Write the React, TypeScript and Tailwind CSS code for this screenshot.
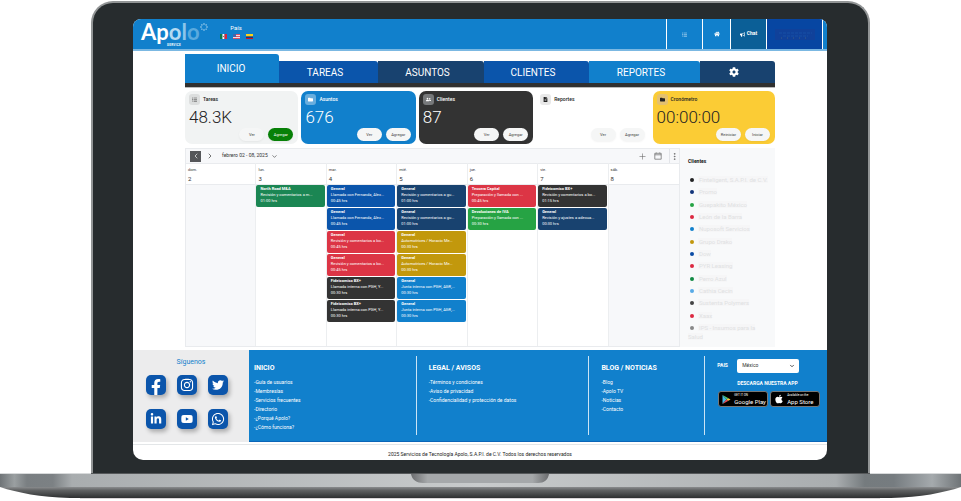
import { FaFacebookF, FaInstagram, FaTwitter, FaLinkedinIn, FaYoutube, FaWhatsapp, FaCog, FaHome, FaBullhorn, FaListUl, FaFolder, FaUserFriends, FaFileAlt, FaApple } from 'react-icons/fa';
import { ChevronLeft, ChevronRight, ChevronDown, Plus, MoreVertical } from 'lucide-react';
import type { ReactNode } from 'react';

const tabs = [
  { label: 'TAREAS', cls: 'bg-[#0b55ab]' },
  { label: 'ASUNTOS', cls: 'bg-[#18426f]' },
  { label: 'CLIENTES', cls: 'bg-[#0b55ab]' },
  { label: 'REPORTES', cls: 'bg-[#1180cc]' },
];

type Action = { label: string; cls?: string };
type CardProps = { title: string; value?: string; icon: ReactNode; cls: string; iconCls: string; actions: Action[] };

const cards: CardProps[] = [
  { title: 'Tareas', value: '48.3K', icon: <FaListUl />, cls: 'bg-[#f1f3f3] text-[#222]', iconCls: 'bg-[#dcdede] text-[#444]', actions: [{ label: 'Ver' }, { label: 'Agregar', cls: 'bg-[#078007] text-white' }] },
  { title: 'Asuntos', value: '676', icon: <FaFolder />, cls: 'bg-[#1180cc] text-white', iconCls: 'bg-[#68aede] text-white', actions: [{ label: 'Ver' }, { label: 'Agregar' }] },
  { title: 'Clientes', value: '87', icon: <FaUserFriends />, cls: 'bg-[#333] text-white', iconCls: 'bg-[#77797b] text-white', actions: [{ label: 'Ver' }, { label: 'Agregar' }] },
  { title: 'Reportes', icon: <FaFileAlt />, cls: 'bg-white text-[#222]', iconCls: 'bg-[#e8e8e8] text-[#222]', actions: [{ label: 'Ver' }, { label: 'Agregar' }] },
  { title: 'Cronómetro', value: '00:00:00', icon: <FaFolder />, cls: 'bg-[#fbcc35] text-[#222]', iconCls: 'bg-[#e3c070] text-[#222]', actions: [{ label: 'Reiniciar' }, { label: 'Iniciar' }] },
];

type Event = { title: string; text: string; time: string; cls: string };
const ferLlamada: Event = { title: 'General', text: 'Llamada con Fernanda, Alex...', time: '00:45 hrs', cls: 'bg-[#0b55ab]' };
const revGu: Event = { title: 'General', text: 'Revisión y comentarios a gu...', time: '01:00 hrs', cls: 'bg-[#18426f]' };
const revBo: Event = { title: 'General', text: 'Revisión y comentarios a bo...', time: '00:45 hrs', cls: 'bg-[#dc3545]' };
const auto: Event = { title: 'General', text: 'Automotrices / Horacio Me...', time: '00:30 hrs', cls: 'bg-[#c2980c]' };
const fidei: Event = { title: 'Fideicomiso BX+', text: 'Llamada interna con PGH, Y...', time: '00:30 hrs', cls: 'bg-[#333]' };
const junta: Event = { title: 'General', text: 'Junta interna con PGH, AGR,...', time: '00:30 hrs', cls: 'bg-[#1180cc]' };

const days: { name: string; date: number; events: Event[] }[] = [
  { name: 'dom.', date: 2, events: [] },
  { name: 'lun.', date: 3, events: [{ title: 'North Road M&A', text: 'Revisión y comentarios a m...', time: '01:00 hrs', cls: 'bg-[#1b8653]' }] },
  { name: 'mar.', date: 4, events: [ferLlamada, ferLlamada, revBo, revBo, fidei, fidei] },
  { name: 'mié.', date: 5, events: [revGu, revGu, auto, auto, junta, junta] },
  { name: 'jue.', date: 6, events: [
    { title: 'Tessera Capital', text: 'Preparación y llamada con ...', time: '00:45 hrs', cls: 'bg-[#dc3545]' },
    { title: 'Devoluciones de IVA', text: 'Preparación y llamada con ...', time: '00:30 hrs', cls: 'bg-[#26a344]' },
  ] },
  { name: 'vie.', date: 7, events: [
    { title: 'Fideicomiso BX+', text: 'Revisión y comentarios a bo...', time: '01:15 hrs', cls: 'bg-[#333]' },
    { title: 'General', text: 'Revisión y ajustes a adecua...', time: '00:30 hrs', cls: 'bg-[#18426f]' },
  ] },
  { name: 'sáb.', date: 8, events: [] },
];

const clients = [
  ['Finteligent, S.A.P.I. de C.V.', 'bg-[#222]'],
  ['Promo', 'bg-[#12357a]'],
  ['Guepakito México', 'bg-[#26a344]'],
  ['León de la Barra', 'bg-[#dc2940]'],
  ['Nuposoft Servicios', 'bg-[#1180cc]'],
  ['Grupo Drako', 'bg-[#c2980c]'],
  ['Dow', 'bg-[#0b4ca5]'],
  ['PYR Leasing', 'bg-[#dc2940]'],
  ['Perro Azul', 'bg-[#118a42]'],
  ['Cathia Cecin', 'bg-[#58aae6]'],
  ['Sustenta Polymers', 'bg-[#444]'],
  ['Xaax', 'bg-[#dc2940]'],
  ['IPS - Insumos para la Salud', 'bg-[#888]'],
];

const socials = [
  { name: 'Facebook', icon: <FaFacebookF className="mt-1 size-4" /> },
  { name: 'Instagram', icon: <FaInstagram className="size-3.5" /> },
  { name: 'Twitter', icon: <FaTwitter className="size-3" /> },
  { name: 'LinkedIn', icon: <FaLinkedinIn className="size-3" /> },
  { name: 'YouTube', icon: <FaYoutube className="size-3" /> },
  { name: 'WhatsApp', icon: <FaWhatsapp className="size-3.5" /> },
];

const footerColumns = [
  { title: 'INICIO', pad: 'pl-[5px]', links: ['Guía de usuarios', 'Membresías', 'Servicios frecuentes', 'Directorio', '¿Porqué Apolo?', '¿Cómo funciona?'] },
  { title: 'LEGAL / AVISOS', pad: 'pl-3', links: ['Términos y condiciones', 'Aviso de privacidad', 'Confidencialidad y protección de datos'] },
  { title: 'BLOG / NOTICIAS', pad: 'pl-3', links: ['Blog', 'Apolo TV', 'Noticias', 'Contacto'] },
];

function Flag({ kind }: { kind: 'mx' | 'us' | 'co' }) {
  return (
    <svg viewBox="0 0 14 10" className="h-[5px] w-[7px]" aria-hidden="true">
      {kind === 'mx' && (<><path fill="#0b7a4b" d="M0 0h5v10H0z" /><path fill="#fff" d="M5 0h4v10H5z" /><path fill="#d7263d" d="M9 0h5v10H9z" /><circle cx="7" cy="5" r="1.3" fill="#9c7b4b" /></>)}
      {kind === 'us' && (<><path fill="#f3dfe4" d="M0 0h14v10H0z" /><path fill="#d9536a" d="M0 0h14v2H0zM0 4h14v2H0zM0 8h14v2H0z" /><path fill="#4664a8" d="M0 0h6v6H0z" /></>)}
      {kind === 'co' && (<><path fill="#fcd116" d="M0 0h14v5H0z" /><path fill="#173a80" d="M0 5h14v3H0z" /><path fill="#ce1126" d="M0 8h14v2H0z" /></>)}
    </svg>
  );
}

function Header() {
  return (
    <header className="flex h-8 border-b-2 border-[#7bb8e2] bg-[#1180cc] text-white">
      <div className="flex flex-1 items-start pl-2">
        <a href="#" className="block">
          <span className="flex items-start font-['Lato'] text-[22px] leading-[22px] font-bold">
            <span className="pt-0.5">Ap<span className="text-[#b5daf2]">o</span><span className="text-[#8cc5ea]">l</span><span className="text-[#5baade]">o</span></span>
            <svg viewBox="0 0 16 16" className="mt-1 size-2" aria-hidden="true">
              <g fill="#d5ebf9">
                <circle cx="8" cy="2" r="1.300" /><circle cx="12.200" cy="3.800" r="1.300" /><circle cx="14" cy="8" r="1.300" /><circle cx="12.200" cy="12.200" r="1.300" />
                <circle cx="8" cy="14" r="1.300" /><circle cx="3.800" cy="12.200" r="1.300" /><circle cx="2" cy="8" r="1.300" /><circle cx="3.800" cy="3.800" r="1.300" />
              </g>
            </svg>
          </span>
          <span className="block pl-[26px] text-[3px] leading-[4px] font-bold tracking-widest">SERVICE</span>
        </a>
        <div className="ml-3 pt-[5px] text-center">
          <p className="text-[6px] leading-[8px]">País</p>
          <div className="mt-0.5 flex gap-1.5"><Flag kind="mx" /><Flag kind="us" /><Flag kind="co" /></div>
        </div>
      </div>
      <nav className="flex text-[5px] font-bold" aria-label="Accesos">
        <button aria-label="Menú" className="flex w-9 items-center justify-center border-l border-white"><FaListUl className="size-[5px] text-[#cfe6f6]" /></button>
        <button aria-label="Inicio" className="flex w-7 items-center justify-center border-l border-white"><FaHome className="size-[6px]" /></button>
        <button className="flex w-9 items-center justify-center gap-0.5 border-l border-white bg-[#0b5f97]"><FaBullhorn className="size-[5px]" />Chat</button>
        <button aria-label="Cuenta" className="flex w-14 items-center justify-center border-l border-white bg-[#0746a2]">
          <svg viewBox="0 0 40 11" className="h-[11px] w-10" aria-hidden="true">
            <path fill="#10419a" d="M0 0h40v11H0z" />
            <path stroke="#1750a6" strokeDasharray="3 1" d="M4 4h33M8 7h25" />
            <path stroke="#3c5f86" strokeDasharray="1 5" d="M6 9h30" />
          </svg>
        </button>
        <span className="w-[5px] border-l border-white" />
      </nav>
    </header>
  );
}

function Tabs() {
  return (
    <nav className="grid grid-cols-[94fr_99fr_106fr_105fr_111fr_75fr] items-end border-b-4 border-[#303030] text-[10px] text-white shadow-[0_1px_0_#bbb]" aria-label="Secciones">
      <button className="h-[29px] rounded-tr-[3px] bg-[#1180cc] pr-0.5">INICIO</button>
      {tabs.map((t) => (
        <button key={t.label} className={`h-[22px] rounded-tr-[3px] pr-[7px] ${t.cls}`}>{t.label}</button>
      ))}
      <button aria-label="Configuración" className="flex h-[22px] items-center justify-center rounded-tr-[3px] bg-[#18426f] pr-[7px]"><FaCog className="size-[10px]" /></button>
    </nav>
  );
}

function Card({ title, value, icon, cls, iconCls, actions }: CardProps) {
  return (
    <section className={`flex h-[53px] flex-col rounded-[7px] px-1 py-[3px] ${cls}`}>
      <div className="flex items-center gap-[3px]">
        <span className={`flex size-[11px] items-center justify-center rounded-[3px] text-[5px] ${iconCls}`}>{icon}</span>
        <h2 className="text-[5px] leading-[11px] font-medium">{title}</h2>
      </div>
      <p className="flex-1 text-[17px] leading-[24px] font-light">{value}</p>
      <div className="-mt-3 flex justify-end gap-1 pr-px">
        {actions.map((a) => (
          <button key={a.label} className={`h-[13px] w-[25px] rounded-full text-[4px] leading-[13px] shadow-xs ${a.cls ?? 'bg-[#f5f6f6] text-[#444]'}`}>{a.label}</button>
        ))}
      </div>
    </section>
  );
}

function Calendar() {
  return (
    <section className="border border-[#e9ebee]" aria-label="Calendario">
      <div className="flex h-3.5 items-center bg-[#f7f8fa] pl-1 text-[#333]">
        <button aria-label="Anterior" className="flex size-[11px] items-center justify-center bg-[#55575a] text-white"><ChevronLeft className="size-2" /></button>
        <button aria-label="Siguiente" className="ml-[5px]"><ChevronRight className="size-2" /></button>
        <button className="ml-2 flex items-center gap-[3px] text-[5px]">febrero 02 - 08, 2025 <ChevronDown className="size-[7px]" /></button>
        <div className="ml-auto flex h-full items-center gap-[7px] text-[#666]">
          <button aria-label="Agregar evento"><Plus className="size-[9px]" strokeWidth={1.5} /></button>
          <button aria-label="Ver calendario">
            <svg viewBox="0 0 8 8" className="size-2" fill="none" stroke="currentColor" strokeWidth=".7" aria-hidden="true"><path d="M.8 1.300h6.400v5.900H.8zM.8 2.800h6.400M2.300.500v.8M5.700.500v.8" /></svg>
          </button>
          <button aria-label="Más opciones" className="flex h-full items-center border-l border-[#e2e4e8]"><MoreVertical className="size-[9px]" /></button>
        </div>
      </div>
      <div className="grid h-[183px] grid-cols-7">
        {days.map((d, i) => (
          <div key={d.name} className="flex min-w-0 flex-col border-r border-[#eceef0] last:border-r-0">
            <div className="h-[22px] border-y border-[#e9ebee] pt-0.5 pl-0.5 text-[#333]">
              <p className="text-[4px] leading-[8px]">{d.name}</p>
              <p className="text-[6px] leading-[10px]">{d.date}</p>
            </div>
            <div className={`flex flex-1 flex-col gap-px pr-px ${i === 0 || i === 6 ? 'bg-[#f7f8fa]' : 'bg-white'}`}>
              {d.events.map((e, j) => (
                <article key={j} className={`h-[22px] overflow-hidden rounded-[2px] pt-px pl-1 text-[4px] leading-[6px] whitespace-nowrap text-white ${e.cls}`}>
                  <h3 className="font-bold">{e.title}</h3>
                  <p>{e.text}</p>
                  <p>{e.time}</p>
                </article>
              ))}
            </div>
          </div>
        ))}
      </div>
    </section>
  );
}

function Clients() {
  return (
    <aside className="flex flex-col bg-[#f8f9fa] pt-2 pr-1.5 pb-1.5 pl-2">
      <h2 className="text-[5px] leading-[10px] font-bold text-[#111]">Clientes</h2>
      <ul className="mt-[9px] flex flex-1 flex-col justify-between text-[6px] leading-[9px] text-[#e0e1e2]">
        {clients.map(([name, dot]) => (
          <li key={name}>
            <span className={`mr-1 ml-0.5 inline-block size-1 rounded-full ${dot}`} />
            <span className="bg-[#f6f6f7] pl-px">{name}</span>
          </li>
        ))}
      </ul>
    </aside>
  );
}

function StoreBadge({ top, name, icon }: { top: string; name: string; icon: ReactNode }) {
  return (
    <a href="#" className="flex h-4 w-[50px] items-center gap-[3px] rounded-[3px] border border-[#777] bg-black pl-[3px] text-white">
      {icon}
      <span className="whitespace-nowrap">
        <span className="block text-[3px] leading-[5px]">{top}</span>
        <span className="block text-[6px] leading-[7px]">{name}</span>
      </span>
    </a>
  );
}

function Footer() {
  return (
    <footer>
      <div className="flex h-[92px]">
        <section className="w-[116px] bg-[#ececed] px-[13px] pt-[7px]">
          <h2 className="text-center text-[7px] leading-[10px] text-[#1180cc]">Síguenos</h2>
          <div className="mt-2 flex flex-wrap gap-x-[11px] gap-y-3.5">
            {socials.map((s) => (
              <a key={s.name} href="#" aria-label={s.name} className="flex size-5 items-center justify-center overflow-hidden rounded-[5px] bg-[#0b55ab] text-white shadow-[2px_3px_4px_#0004]">{s.icon}</a>
            ))}
          </div>
        </section>
        <div className="grid flex-1 grid-cols-[168fr_173fr_116fr_122fr] border-b border-[#0b66b8] bg-[#1180cc] py-1.5 text-white">
          {footerColumns.map((c) => (
            <section key={c.title} className={`border-r border-[#cbe4f5] pt-[7px] ${c.pad}`}>
              <h2 className="text-[7px] leading-[10px] font-bold whitespace-nowrap">{c.title}</h2>
              <ul className="mt-[5px] text-[5px] leading-[9px]">
                {c.links.map((l) => <li key={l}><a href="#">-{l}</a></li>)}
              </ul>
            </section>
          ))}
          <section className="pt-[3px] pl-3">
            <div className="flex items-center">
              <label htmlFor="pais" className="w-5 text-[5px] font-bold">PAIS</label>
              <div className="relative">
                <select id="pais" defaultValue="México" className="block h-3.5 w-[62px] appearance-none rounded-[2px] bg-white pl-[5px] text-[5px] text-[#333]">
                  <option>México</option>
                </select>
                <ChevronDown className="pointer-events-none absolute top-1 right-1 size-[6px] text-[#222]" strokeWidth={3} />
              </div>
            </div>
            <p className="mt-[6px] pl-5 text-[5px] leading-[9px] font-bold whitespace-nowrap">DESCARGA NUESTRA APP</p>
            <div className="mt-[3px] flex gap-0.5 pl-px">
              <StoreBadge top="GET IT ON" name="Google Play" icon={
                <svg viewBox="0 0 16 18" className="size-[9px] shrink-0" aria-hidden="true">
                  <path fill="#46b8e6" d="M0 0v18l8-9z" /><path fill="#4ac776" d="M0 0l12 6.500L8 9z" /><path fill="#e94b57" d="M0 18l12-6.500L8 9z" /><path fill="#f8cc3c" d="M12 6.500L16 9l-4 2.500L8 9z" />
                </svg>} />
              <StoreBadge top="Available on the" name="App Store" icon={<FaApple className="size-[10px] shrink-0" />} />
            </div>
          </section>
        </div>
      </div>
      <p className="mt-0.5 h-4 border-t border-[#e3e6e8] pt-[5px] text-center text-[5px] leading-[9px] text-[#222]">2025 Servicios de Tecnología Apolo, S.A.P.I. de C.V. Todos los derechos reservados</p>
    </footer>
  );
}

function LaptopBase() {
  return (
    <svg viewBox="0 0 961 28" preserveAspectRatio="none" className="block h-7 w-full" aria-hidden="true">
      <defs>
        <linearGradient id="deck" x1="0" x2="1" y1="0" y2="0">
          <stop offset="0" stopColor="#6f7477" /><stop offset=".015" stopColor="#9a9fa1" /><stop offset=".028" stopColor="#7a7f82" /><stop offset=".055" stopColor="#7c8184" /><stop offset=".075" stopColor="#a9adaf" />
          <stop offset=".5" stopColor="#c8cbcc" />
          <stop offset=".87" stopColor="#a9adaf" /><stop offset=".9" stopColor="#757b7e" /><stop offset=".93" stopColor="#767c80" /><stop offset=".97" stopColor="#a5aaad" /><stop offset="1" stopColor="#6f7477" />
        </linearGradient>
        <linearGradient id="under" x1="0" x2="0" y1="0" y2="1"><stop offset="0" stopColor="#8a8c8e" /><stop offset=".3" stopColor="#606263" /><stop offset="1" stopColor="#2d2f30" /></linearGradient>
        <linearGradient id="notch" x1="0" x2="1" y1="0" y2="0"><stop offset="0" stopColor="#6b6d6f" /><stop offset=".12" stopColor="#a5a8aa" /><stop offset=".88" stopColor="#a5a8aa" /><stop offset="1" stopColor="#6b6d6f" /></linearGradient>
      </defs>
      <path fill="#d8d5d7" d="M80 25h800v1H80z" />
      <path fill="url(#under)" d="M0 14c18 6 40 10 70 11h821c30-1 52-5 70-11z" />
      <path fill="url(#deck)" d="M0 0h961v14H0z" />
      <path fill="#d8dadb" d="M0 0h91v1H0zM870 0h91v1h-91z" />
      <path fill="#55585a" d="M91 0h779v1H91z" />
      <path fill="url(#notch)" d="M411 1h138c-1 6-5 9-11 9H423c-6 0-11-3-12-9z" />
    </svg>
  );
}

export default function App() {
  return (
    <main className="bg-white pt-px font-['Roboto','Open_Sans',sans-serif] text-[#222]">
      <div className="mx-[91px] rounded-t-[22px] border-x-2 border-t-2 border-[#929596] bg-[#272c2e] pt-4 pr-[41px] pb-[13px] pl-10">
        <div className="overflow-hidden rounded-t-[8px] rounded-b-[10px] bg-white">
          <Header />
          <div className="px-[52px] pt-[3px]">
            <Tabs />
            <div className="mt-1 grid grid-cols-[113fr_114fr_114fr_113fr_122fr] gap-[3px]">
              {cards.map((c) => <Card key={c.title} {...c} />)}
            </div>
            <div className="mt-1 grid grid-cols-[495fr_95fr]">
              <Calendar />
              <Clients />
            </div>
          </div>
          <div className="mt-[3px]"><Footer /></div>
        </div>
      </div>
      <LaptopBase />
    </main>
  );
}
